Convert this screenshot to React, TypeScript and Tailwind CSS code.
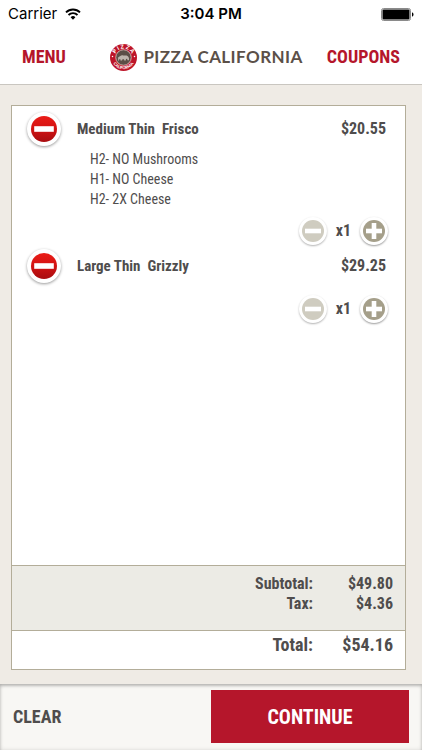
import { useState } from "react";

type Item = {
  id: number;
  name: string;
  price: number;
  qty: number;
  mods: string[];
};

const initialItems: Item[] = [
  {
    id: 1,
    name: "Medium Thin  Frisco",
    price: 20.55,
    qty: 1,
    mods: ["H2- NO Mushrooms", "H1- NO Cheese", "H2- 2X Cheese"],
  },
  { id: 2, name: "Large Thin  Grizzly", price: 29.25, qty: 1, mods: [] },
];

const TAX = 4.36;

const money = (value: number) => `$${value.toFixed(2)}`;

function WifiIcon() {
  return (
    <svg viewBox="0 0 16 12" className="h-3 w-4" aria-hidden="true">
      <path d="M1 4.4a10 10 0 0 1 14 0" fill="none" stroke="#000" strokeWidth="1.9" />
      <path d="M3.5 7a6.4 6.4 0 0 1 9 0" fill="none" stroke="#000" strokeWidth="1.9" />
      <path d="M8 11.8 5.6 9.3a3.4 3.4 0 0 1 4.8 0z" />
    </svg>
  );
}

function BatteryIcon() {
  return (
    <svg viewBox="0 0 33 13" className="h-[13px] w-[33px]" aria-hidden="true">
      <rect x="0.5" y="0.5" width="29" height="12" rx="2" fill="#fff" stroke="#8a8a8a" />
      <rect x="1.5" y="1.5" width="27" height="10" rx="1" />
      <path d="M31 4.2c1 .5 1.5 1.3 1.5 2.3s-.5 1.8-1.5 2.3z" />
    </svg>
  );
}

function Logo() {
  return (
    <svg viewBox="0 0 54 54" className="h-[27px] w-[27px]" aria-hidden="true">
      <defs>
        <path id="arc-top" d="M9 27a18 18 0 0 1 36 0" />
        <path id="arc-bottom" d="M3.5 27a23.5 23.5 0 0 0 47 0" />
      </defs>
      <circle cx="27" cy="27" r="27" fill="#bd1529" />
      <circle cx="27" cy="27" r="15.5" fill="#5b4f47" stroke="#e9c9c4" strokeWidth="1.5" />
      <g fill="#fff" fontFamily="Lato, sans-serif" fontWeight="900">
        <text fontSize="11" textAnchor="middle">
          <textPath href="#arc-top" startOffset="50%">P I Z Z A</textPath>
        </text>
        <text fontSize="8" textAnchor="middle">
          <textPath href="#arc-bottom" startOffset="50%">CALIFORNIA</textPath>
        </text>
      </g>
      <circle cx="5" cy="25" r="1.5" fill="#fff" />
      <circle cx="49" cy="25" r="1.5" fill="#fff" />
      <path
        d="M15.5 28c1-2 3-2.5 4.5-3.5 2-1.8 4-2.5 6.5-1.5 3 .5 6-.8 8.5 1.2 2.5 1.8 3.5 4.3 3 8.3h-3l-.8-3-2.2.5-.5 3h-3l-.5-2.5h-3l-1 2.5h-3l-.5-3-2 .5-.5 2.5h-2l.5-3.5z"
        fill="#bdb5ad"
      />
    </svg>
  );
}

function RemoveIcon() {
  return (
    <svg viewBox="0 0 26 26" className="size-[26px]" aria-hidden="true">
      <defs>
        <linearGradient id="red" x1="0" y1="0" x2="0" y2="1">
          <stop offset="0" stopColor="#ea1c17" />
          <stop offset="0.45" stopColor="#d51413" />
          <stop offset="1" stopColor="#a80d10" />
        </linearGradient>
      </defs>
      <circle cx="13" cy="13" r="13" fill="url(#red)" />
      <rect x="3.2" y="10.2" width="19.6" height="5.6" fill="#fff" />
    </svg>
  );
}

function QtyIcon({ plus = false }: { plus?: boolean }) {
  return (
    <svg viewBox="0 0 22 22" className="size-[22px]" aria-hidden="true">
      <circle cx="11" cy="11" r="11" fill={plus ? "#a59f8a" : "#cfccc0"} />
      <rect x="3" y="8.7" width="16" height="4.6" fill="#fff" />
      {plus && <rect x="8.7" y="3" width="4.6" height="16" fill="#fff" />}
    </svg>
  );
}

export default function App() {
  const [items, setItems] = useState(initialItems);

  const changeQty = (id: number, by: number) =>
    setItems(items.map((it) => (it.id === id ? { ...it, qty: Math.max(1, it.qty + by) } : it)));

  const subtotal = items.reduce((sum, it) => sum + it.price * it.qty, 0);
  const tax = items.length ? TAX : 0;

  return (
    <div className="flex min-h-screen flex-col bg-[#efebe5] font-['Roboto_Condensed','Roboto',sans-serif] text-base font-bold text-[#4f4d4d]">
      {/* Status bar */}
      <div className="grid h-7 grid-cols-3 items-center bg-white px-2 font-['Inter',sans-serif] text-[15px] font-normal text-black">
        <div className="flex items-center gap-2">
          Carrier <WifiIcon />
        </div>
        <div className="text-center font-semibold">3:04 PM</div>
        <div className="flex justify-end">
          <BatteryIcon />
        </div>
      </div>

      {/* Header */}
      <header className="flex h-[57px] items-center border-b border-[#c9c6c0] bg-white px-[22px] pt-0.5 text-lg text-[#b5162b]">
        <a href="#menu">MENU</a>
        <div className="mr-6 ml-auto flex items-center gap-1.5">
          <Logo />
          <h1 className="font-['Lato',sans-serif] text-[17px] font-bold tracking-wide text-[#5b5048]">
            PIZZA CALIFORNIA
          </h1>
        </div>
        <a href="#coupons">COUPONS</a>
      </header>

      {/* Order */}
      <main className="mt-5 mr-4 mb-3.5 ml-[11px] flex flex-1 flex-col border border-[#b3ad99] bg-white">
        <ul className="flex-1 space-y-1 pt-1.5 pr-[17px] pl-[15px]">
          {items.map((item) => (
            <li key={item.id}>
              <div className="flex items-center">
                <button
                  aria-label={`Remove ${item.name}`}
                  onClick={() => setItems(items.filter((it) => it.id !== item.id))}
                  className="flex size-[34px] items-center justify-center rounded-full bg-white shadow-[0_1px_3px_rgba(0,0,0,0.4)]"
                >
                  <RemoveIcon />
                </button>
                <span className="ml-4 flex-1 text-[15px] whitespace-pre">{item.name}</span>
                <span className="pr-0.5">{money(item.price)}</span>
              </div>
              {item.mods.length > 0 && (
                <ul className="mt-[3px] -mb-1 ml-[63px] text-sm leading-5 font-normal">
                  {item.mods.map((mod) => (
                    <li key={mod}>{mod}</li>
                  ))}
                </ul>
              )}
              <div className="mt-3 flex items-center justify-end">
                <button
                  aria-label="Decrease quantity"
                  onClick={() => changeQty(item.id, -1)}
                  className="flex size-7 items-center justify-center rounded-full bg-white shadow-[0_1px_2px_rgba(0,0,0,0.3)]"
                >
                  <QtyIcon />
                </button>
                <span className="w-[33px] text-center">x{item.qty}</span>
                <button
                  aria-label="Increase quantity"
                  onClick={() => changeQty(item.id, 1)}
                  className="flex size-7 items-center justify-center rounded-full bg-white shadow-[0_1px_2px_rgba(0,0,0,0.4)]"
                >
                  <QtyIcon plus />
                </button>
              </div>
            </li>
          ))}
        </ul>

        <dl className="grid grid-cols-[1fr_80px] border-y border-[#b3ad99] bg-[#ecebe5] pt-2 pr-3 pb-4 text-right leading-5">
          <dt>Subtotal:</dt>
          <dd>{money(subtotal)}</dd>
          <dt>Tax:</dt>
          <dd>{money(tax)}</dd>
        </dl>
        <dl className="grid grid-cols-[1fr_80px] pr-3 pb-2.5 text-right text-lg">
          <dt>Total:</dt>
          <dd>{money(subtotal + tax)}</dd>
        </dl>
      </main>

      {/* Footer */}
      <footer className="flex items-center justify-between bg-[#f8f7f4] px-[13px] pt-1.5 pb-[7px] shadow-[inset_0_2px_3px_rgba(0,0,0,0.22),inset_0_0_4px_rgba(0,0,0,0.12)]">
        <button onClick={() => setItems([])} className="text-lg">
          CLEAR
        </button>
        <button className="h-[53px] w-1/2 bg-[#b5162b] text-xl text-white">CONTINUE</button>
      </footer>
    </div>
  );
}
